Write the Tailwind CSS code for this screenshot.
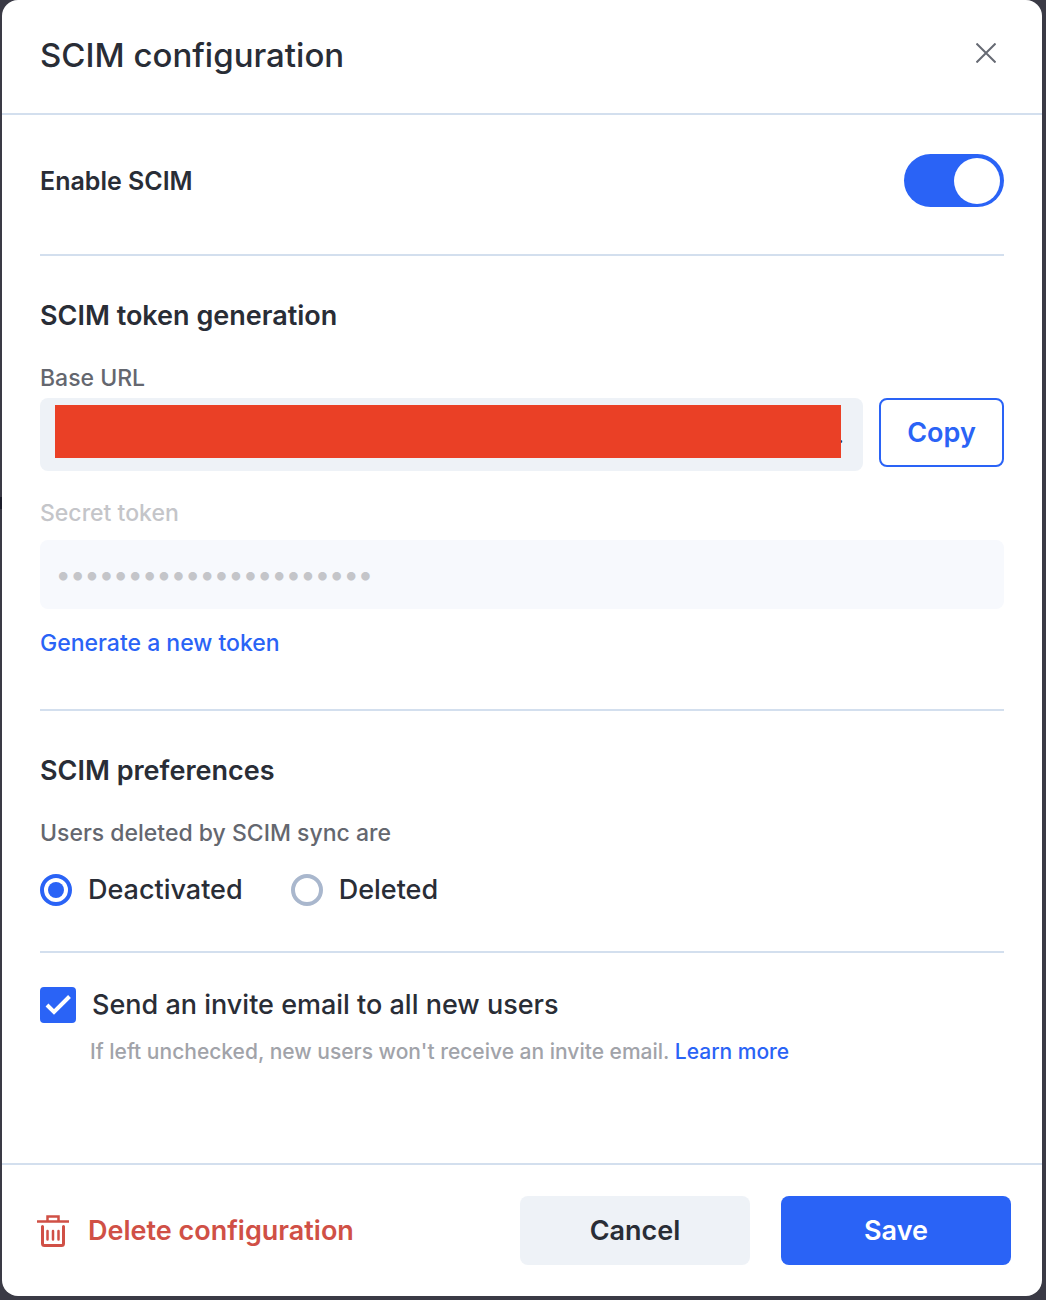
<!DOCTYPE html>
<html lang="en">
  <head>
    <meta charset="UTF-8" />
    <meta name="viewport" content="width=device-width, initial-scale=1.0" />
    <title>SCIM configuration</title>
    <script src="https://cdn.jsdelivr.net/npm/@tailwindcss/browser@4"></script>
    <style>
      body {
        font-family: "Inter", "Liberation Sans", sans-serif;
      }
    </style>
  </head>
  <body class="relative flex min-h-screen bg-[#3a3a45] pr-1 pb-1 pl-0.5 text-[#292d36]">
    <div class="absolute top-[497px] left-0 h-3 w-0.5 bg-[#1c1d2a]"></div>

    <form class="flex flex-1 flex-col rounded-2xl bg-white">
      <!-- Header -->
      <header class="flex items-start justify-between border-b-2 border-[#d3dfee] px-[38px] pt-[35px] pb-[38px]">
        <h1 class="text-[33px] leading-10 font-medium">SCIM configuration</h1>
        <button type="button" aria-label="Close" class="p-2">
          <svg class="h-5 w-5" viewBox="0 0 20 20" fill="none" stroke="#666a73" stroke-width="2">
            <path d="M.5.5l19 19M19.5.5l-19 19" />
          </svg>
        </button>
      </header>

      <main class="flex-1 px-[38px]">
        <!-- Enable toggle -->
        <div class="flex items-center justify-between border-b-2 border-[#d3dfee] pt-[39px] pb-[47px]">
          <label for="enable-scim" class="text-[25px] leading-10 font-semibold">Enable SCIM</label>
          <span class="relative flex">
            <input
              type="checkbox"
              role="switch"
              id="enable-scim"
              checked
              class="peer h-[53px] w-[100px] appearance-none rounded-full bg-[#a9b7cd] checked:bg-[#2a63f6]"
            />
            <span
              class="pointer-events-none absolute top-1 left-1 h-[46px] w-[46px] rounded-full bg-white peer-checked:right-1 peer-checked:left-auto"
            ></span>
          </span>
        </div>

        <!-- Token generation -->
        <section class="border-b-2 border-[#d3dfee] pt-10 pb-[50px]">
          <h2 class="text-[27px] leading-10 font-semibold">SCIM token generation</h2>
          <label for="base-url" class="mt-[26px] block text-[23px] leading-8 font-medium text-[#64676f]">Base URL</label>
          <div class="mt-1 flex items-start gap-4">
            <div class="relative flex-1">
              <input
                type="text"
                id="base-url"
                readonly
                value="."
                class="block h-[73px] w-full rounded-lg bg-[#eef2f7] pr-[19px] text-right text-[23px] outline-none"
              />
              <div class="absolute top-[7px] right-[22px] bottom-[13px] left-[15px] bg-[#ea4026]"></div>
            </div>
            <button
              type="button"
              class="h-[69px] w-[125px] rounded-lg border-2 border-[#2a63f6] pt-0.5 text-[27px] font-semibold text-[#2a63f6]"
            >
              Copy
            </button>
          </div>

          <label for="secret-token" class="mt-[26px] block text-[23px] leading-8 font-medium text-[#c4c5c9]"
            >Secret token</label
          >
          <input
            type="password"
            id="secret-token"
            disabled
            value="0000000000000000000000"
            class="mt-[11px] block h-[69px] w-full rounded-lg bg-[#f7f9fd] px-4 text-[27px] font-medium text-[#c4c5c9]"
          />
          <a href="#" class="mt-[18px] inline-block align-top text-[23px] leading-8 font-medium text-[#2a63f6]"
            >Generate a new token</a
          >
        </section>

        <!-- Preferences -->
        <section class="border-b-2 border-[#d3dfee] pt-10 pb-[45px]">
          <h2 class="text-[27px] leading-10 font-semibold">SCIM preferences</h2>
          <fieldset>
            <legend class="pt-[26px] text-[23px] leading-8 font-medium text-[#64676f]">
              Users deleted by SCIM sync are
            </legend>
            <div class="mt-[25px] flex gap-12 text-[27px] leading-8 font-medium">
              <label class="flex items-center gap-4">
                <input
                  type="radio"
                  name="deleted-users"
                  checked
                  class="h-8 w-8 appearance-none rounded-full border-4 border-[#a9b7cd] bg-clip-content p-1 checked:border-[#2a63f6] checked:bg-[#2a63f6]"
                />
                Deactivated
              </label>
              <label class="flex items-center gap-4">
                <input
                  type="radio"
                  name="deleted-users"
                  class="h-8 w-8 appearance-none rounded-full border-4 border-[#a9b7cd] bg-clip-content p-1 checked:border-[#2a63f6] checked:bg-[#2a63f6]"
                />
                Deleted
              </label>
            </div>
          </fieldset>
        </section>

        <!-- Invite email -->
        <div class="pt-[34px] pb-[95px]">
          <div class="flex items-center gap-4">
            <span class="relative flex">
              <input
                type="checkbox"
                id="invite-email"
                checked
                class="peer h-9 w-9 appearance-none rounded border-4 border-[#a9b7cd] checked:border-[#2a63f6] checked:bg-[#2a63f6]"
              />
              <svg
                class="pointer-events-none absolute inset-0 hidden h-9 w-9 peer-checked:block"
                viewBox="0 0 36 36"
                fill="none"
                stroke="#fff"
                stroke-width="4"
              >
                <path d="M7 18l7 7L29.500 9.500" />
              </svg>
            </span>
            <label for="invite-email" class="text-[27px] leading-9 font-medium">Send an invite email to all new users</label>
          </div>
          <p class="mt-[13px] pl-[50px] text-[21px] leading-8 font-medium text-[#a1a3a9]">
            If left unchecked, new users won't receive an invite email.
            <a href="#" class="text-[#2a63f6]">Learn more</a>
          </p>
        </div>
      </main>

      <!-- Footer -->
      <footer class="flex items-center justify-between border-t-2 border-[#d3dfee] py-[31px] pr-[31px] pl-[35px]">
        <button type="button" class="flex items-center gap-[19px] text-[27px] font-semibold text-[#d05046]">
          <svg class="h-8 w-8" viewBox="0 0 32 32" fill="none" stroke="currentColor" stroke-width="3">
            <path d="M0 6.500h32M10.500 6V1.500h11V6" stroke-width="2.500" />
            <path d="M5.500 11.500v17q0 2 2 2h17q2 0 2-2v-17" stroke-linecap="round" />
            <path d="M10.500 16v8.500M16 16v8.500M21.500 16v8.500" stroke-linecap="round" stroke-width="2.500" />
          </svg>
          <span class="pt-0.5">Delete configuration</span>
        </button>
        <div class="flex gap-[31px] text-[27px] font-semibold">
          <button type="button" class="h-[69px] w-[230px] rounded-lg bg-[#eef2f7] pt-0.5">Cancel</button>
          <button type="submit" class="h-[69px] w-[230px] rounded-lg bg-[#2a63f6] pt-0.5 text-white">Save</button>
        </div>
      </footer>
    </form>
  </body>
</html>
